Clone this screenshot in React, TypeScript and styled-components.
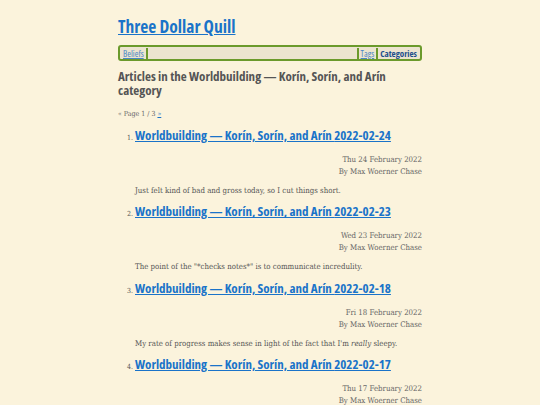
import styled, { createGlobalStyle } from "styled-components";

const GlobalStyle = createGlobalStyle`
  html, body {
    margin: 0;
    padding: 0;
    background: #fbf3dc;
  }
  body {
    font-family: "DejaVu Serif", serif;
    font-stretch: semi-condensed;
    color: #555;
  }
`;

const Page = styled.div`
  width: 304px;
  margin: 0 auto;
  padding-top: 14px;
`;

const SiteTitle = styled.a`
  display: inline-block;
  font-family: "Open Sans", sans-serif;
  font-stretch: 87%;
  font-weight: 700;
  font-size: 17.5px;
  line-height: 24px;
  color: #1a73c9;
  text-decoration: underline;
`;

const Nav = styled.nav`
  display: flex;
  align-items: center;
  margin-top: 7px;
  height: 12px;
  padding: 0 1px;
  border: 2px solid #6b9a2c;
  border-radius: 3px;
  background: #ece4d0;
  font-family: "Open Sans", sans-serif;
  font-stretch: 85%;
  font-size: 9px;
`;

const NavLink = styled.a<{ $current?: boolean; $left?: boolean; $right?: boolean }>`
  padding: 0 2px;
  line-height: 11px;
  color: ${({ $current }) => ($current ? "#1c4f8c" : "#4a86c5")};
  font-weight: ${({ $current }) => ($current ? 700 : 400)};
  text-decoration: ${({ $current }) => ($current ? "none" : "underline")};
  border-left: ${({ $left }) => ($left ? "2px solid #6b9a2c" : "none")};
  border-right: ${({ $right }) => ($right ? "2px solid #6b9a2c" : "none")};
`;

const Spacer = styled.div`
  flex: 1;
`;

const Heading = styled.h1`
  margin: 8px 0 0;
  font-family: "Open Sans", sans-serif;
  font-stretch: 85%;
  font-weight: 700;
  font-size: 13px;
  line-height: 14px;
  color: #555;
`;

const Pager = styled.div`
  margin-top: 12px;
  font-size: 7px;
  line-height: 10px;
  color: #666;

  a {
    color: #1a73c9;
  }
`;

const List = styled.ol`
  margin: 8px 0 0;
  padding-left: 17px;
  font-size: 7px;
`;

const Item = styled.li`
  margin-bottom: 6.3px;
  &::marker {
    color: #555;
  }
`;

const ItemTitle = styled.a`
  font-family: "Open Sans", sans-serif;
  font-stretch: 85%;
  font-weight: 700;
  font-size: 13px;
  line-height: 17px;
  color: #1a73c9;
  text-decoration: underline;
`;

const Meta = styled.div`
  margin-top: 10px;
  text-align: right;
  font-size: 7.8px;
  line-height: 12px;
  color: #666;
`;

const Summary = styled.p`
  margin: 7px 0 0;
  font-size: 7.8px;
  line-height: 12px;
  color: #555;
`;

const posts = [
  {
    date: "2022-02-24",
    day: "Thu 24 February 2022",
    summary: <>Just felt kind of bad and gross today, so I cut things short.</>,
  },
  {
    date: "2022-02-23",
    day: "Wed 23 February 2022",
    summary: <>The point of the "*checks notes*" is to communicate incredulity.</>,
  },
  {
    date: "2022-02-18",
    day: "Fri 18 February 2022",
    summary: (
      <>
        My rate of progress makes sense in light of the fact that I'm <em>really</em> sleepy.
      </>
    ),
  },
  {
    date: "2022-02-17",
    day: "Thu 17 February 2022",
    summary: <>Today was kind of a mess.</>,
  },
];

const App = () => {
  return (
    <>
      <GlobalStyle />
      <Page>
        <SiteTitle href="#">Three Dollar Quill</SiteTitle>
        <Nav>
          <NavLink href="#" $right>
            Beliefs
          </NavLink>
          <Spacer />
          <NavLink href="#" $left $right>
            Tags
          </NavLink>
          <NavLink href="#" $current>
            Categories
          </NavLink>
        </Nav>
        <Heading>Articles in the Worldbuilding — Korín, Sorín, and Arín category</Heading>
        <Pager>
          « Page 1 / 3 <a href="#">»</a>
        </Pager>
        <List>
          {posts.map((post) => (
            <Item key={post.date}>
              <ItemTitle href="#">Worldbuilding — Korín, Sorín, and Arín {post.date}</ItemTitle>
              <Meta>
                {post.day}
                <br />
                By Max Woerner Chase
              </Meta>
              <Summary>{post.summary}</Summary>
            </Item>
          ))}
        </List>
      </Page>
    </>
  );
};

export default App;
